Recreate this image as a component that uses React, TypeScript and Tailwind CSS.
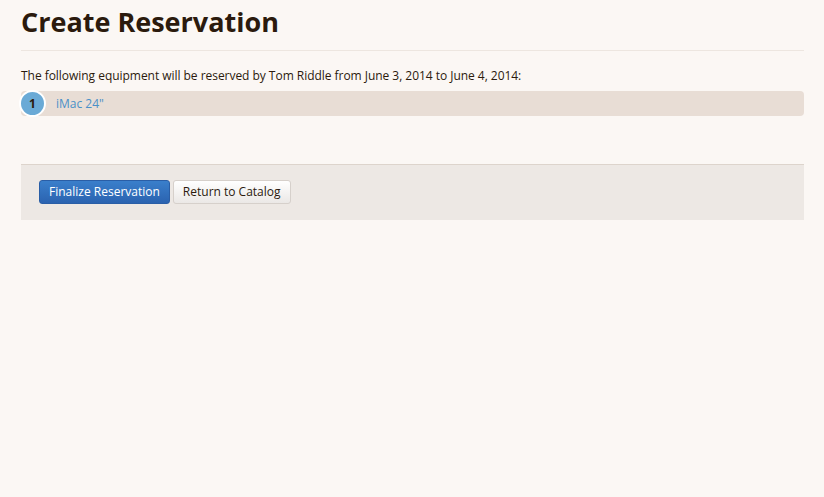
export default function App() {
  return (
    <div className="min-h-[497px] bg-[#fbf7f4] pl-[21px] pr-[20px] font-['Open_Sans',sans-serif] text-[12px] text-[#2b1a0d]">
      <div className="border-b border-[#ede6e0] pb-[8px] pt-[2px]">
        <h1 className="text-[27px] font-bold leading-[40px] text-[#2b1a0d]">Create Reservation</h1>
      </div>

      <p className="mt-[15px] leading-[20px] tracking-[-0.003em]">
        The following equipment will be reserved by Tom Riddle from June 3, 2014 to June 4, 2014:
      </p>

      <div className="relative mt-[5px] flex h-[25px] items-center rounded-[4px] bg-[#e8ddd5] pl-[35px]">
        <span className="absolute left-[-2px] top-[-1px] flex h-[27px] w-[27px] items-center justify-center rounded-full border-[2px] border-white bg-[#6aaad6] text-[12px] font-bold text-[#2b1a0d]">
          1
        </span>
        <a className="text-[12px] text-[#4a90c8]">iMac 24"</a>
      </div>

      <div className="mt-[48px] flex gap-[3px] border-t border-[#ddd4cc] bg-[#ede8e4] px-[18px] pb-[16px] pt-[15px]">
        <button className="h-[24px] rounded-[3px] border border-[#2a5ea6] bg-gradient-to-b from-[#3a7fcb] to-[#2b63b0] px-[9px] text-[12px] text-white">
          Finalize Reservation
        </button>
        <button className="h-[24px] rounded-[3px] border border-[#d6d0cb] bg-gradient-to-b from-white to-[#ebe8e6] px-[9px] text-[12px] text-[#2b1a0d]">
          Return to Catalog
        </button>
      </div>
    </div>
  );
}
